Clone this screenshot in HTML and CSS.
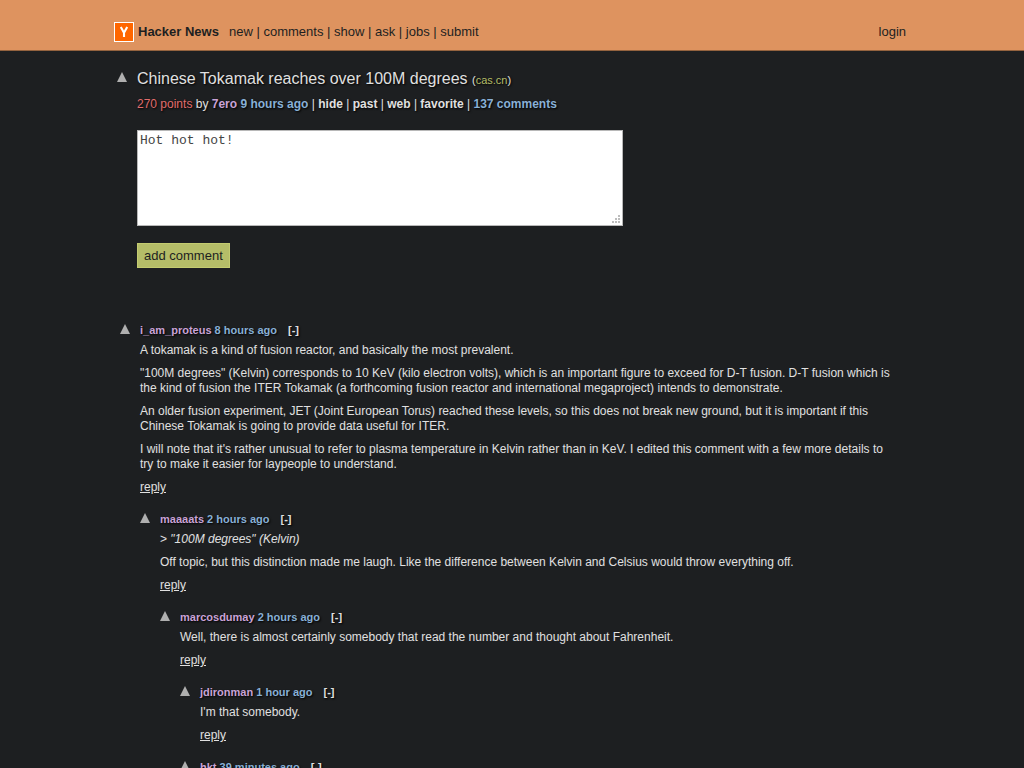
FILE: index.html
```html
<!DOCTYPE html>
<html lang="en">
<head>
<meta charset="utf-8">
<meta name="viewport" content="width=device-width, initial-scale=1">
<title>Chinese Tokamak reaches over 100M degrees | Hacker News</title>
<link rel="stylesheet" href="styles.css">
</head>
<body>
<header class="topbar">
  <div class="wrap topbar-inner">
    <a class="logo" href="#" aria-label="Home"><svg width="20" height="20" viewBox="0 0 20 20" aria-hidden="true"><rect x="0.5" y="0.5" width="19" height="19" fill="#ff6600" stroke="#fff"/><path d="M6.8 5L10 10.8V15M13.2 5L10 10.8" fill="none" stroke="#fff" stroke-width="2.1"/></svg></a>
    <a class="brand" href="#">Hacker News</a>
    <nav class="nav"><a href="#">new</a> | <a href="#">comments</a> | <a href="#">show</a> | <a href="#">ask</a> | <a href="#">jobs</a> | <a href="#">submit</a></nav>
    <a class="login" href="#">login</a>
  </div>
</header>
<main class="wrap">
  <article class="story">
    <a class="vote" href="#" aria-label="Upvote"><svg width="10" height="10" viewBox="0 0 10 10"><path d="M5 0L10 10H0Z"/></svg></a>
    <div class="story-body">
      <h1 class="title"><a href="#">Chinese Tokamak reaches over 100M degrees</a> <span class="site">(<a href="#">cas.cn</a>)</span></h1>
      <p class="subtext"><span class="points">270 points</span> by <a class="user" href="#">7ero</a> <a class="age" href="#">9 hours ago</a> | <a href="#">hide</a> | <a href="#">past</a> | <a href="#">web</a> | <a href="#">favorite</a> | <a class="age" href="#">137 comments</a></p>
      <form class="reply-form">
        <div class="field">
          <textarea class="text" aria-label="Comment">Hot hot hot!</textarea>
          <svg class="grip" width="8" height="8" viewBox="0 0 8 8" aria-hidden="true"><path d="M6 0h2v2H6zM3 3h2v2H3zM6 3h2v2H6zM0 6h2v2H0zM3 6h2v2H3zM6 6h2v2H6z"/></svg>
        </div>
        <button class="submit" type="button">add comment</button>
      </form>
    </div>
  </article>
  <section class="comments">
    <article class="comment">
      <a class="vote" href="#" aria-label="Upvote"><svg width="10" height="10" viewBox="0 0 10 10"><path d="M5 0L10 10H0Z"/></svg></a>
      <div class="comment-body">
        <div class="head"><a class="user" href="#">i_am_proteus</a> <a class="age" href="#">8 hours ago</a> <a class="toggle" href="#">[-]</a></div>
        <p>A tokamak is a kind of fusion reactor, and basically the most prevalent.</p>
        <p>"100M degrees" (Kelvin) corresponds to 10 KeV (kilo electron volts), which is an important figure to exceed for D-T fusion. D-T fusion which is the kind of fusion the ITER Tokamak (a forthcoming fusion reactor and international megaproject) intends to demonstrate.</p>
        <p>An older fusion experiment, JET (Joint European Torus) reached these levels, so this does not break new ground, but it is important if this Chinese Tokamak is going to provide data useful for ITER.</p>
        <p>I will note that it's rather unusual to refer to plasma temperature in Kelvin rather than in KeV. I edited this comment with a few more details to try to make it easier for laypeople to understand.</p>
        <p><a class="reply" href="#">reply</a></p>
      </div>
    </article>
    <article class="comment level-1">
      <a class="vote" href="#" aria-label="Upvote"><svg width="10" height="10" viewBox="0 0 10 10"><path d="M5 0L10 10H0Z"/></svg></a>
      <div class="comment-body">
        <div class="head"><a class="user" href="#">maaaats</a> <a class="age" href="#">2 hours ago</a> <a class="toggle" href="#">[-]</a></div>
        <p>&gt; <i>"100M degrees" (Kelvin)</i></p>
        <p>Off topic, but this distinction made me laugh. Like the difference between Kelvin and Celsius would throw everything off.</p>
        <p><a class="reply" href="#">reply</a></p>
      </div>
    </article>
    <article class="comment level-2">
      <a class="vote" href="#" aria-label="Upvote"><svg width="10" height="10" viewBox="0 0 10 10"><path d="M5 0L10 10H0Z"/></svg></a>
      <div class="comment-body">
        <div class="head"><a class="user" href="#">marcosdumay</a> <a class="age" href="#">2 hours ago</a> <a class="toggle" href="#">[-]</a></div>
        <p>Well, there is almost certainly somebody that read the number and thought about Fahrenheit.</p>
        <p><a class="reply" href="#">reply</a></p>
      </div>
    </article>
    <article class="comment level-3">
      <a class="vote" href="#" aria-label="Upvote"><svg width="10" height="10" viewBox="0 0 10 10"><path d="M5 0L10 10H0Z"/></svg></a>
      <div class="comment-body">
        <div class="head"><a class="user" href="#">jdironman</a> <a class="age" href="#">1 hour ago</a> <a class="toggle" href="#">[-]</a></div>
        <p>I'm that somebody.</p>
        <p><a class="reply" href="#">reply</a></p>
      </div>
    </article>
    <article class="comment level-3">
      <a class="vote" href="#" aria-label="Upvote"><svg width="10" height="10" viewBox="0 0 10 10"><path d="M5 0L10 10H0Z"/></svg></a>
      <div class="comment-body">
        <div class="head"><a class="user" href="#">hkt</a> <a class="age" href="#">39 minutes ago</a> <a class="toggle" href="#">[-]</a></div>
      </div>
    </article>
  </section>
</main>
</body>
</html>
```
FILE: styles.css
```css
* { box-sizing: border-box; }
html { height: 100%; overflow: hidden; }
body {
  margin: 0;
  height: 100%;
  overflow: hidden;
  background: #1d1f21;
  color: #e0e0e0;
  font: 12px/15px "Liberation Sans", Arial, sans-serif;
}
a { color: inherit; text-decoration: none; }
p, h1 { margin: 0; }

.wrap { max-width: 800px; margin: 0 auto; padding: 0 2px; }

.topbar {
  background: #de935f;
  border-bottom: 1px solid #94633f;
  color: #1d1f21;
  font-size: 13px;
  line-height: 20px;
}
.topbar-inner { display: flex; align-items: center; padding-top: 22px; padding-bottom: 8px; }
.logo { display: flex; margin-right: 4px; }
.brand { font-weight: bold; margin-right: 10px; }
.login { margin-left: auto; margin-right: 4px; }

.vote { flex: none; fill: #afafaf; }
.vote svg { display: block; }

.story { display: flex; gap: 10px; padding: 18px 3px 0; }
.story .vote { padding-top: 3px; }
.story-body { flex: 1; min-width: 0; }
.title { font-size: 16px; font-weight: normal; line-height: 20px; text-shadow: 1px 1px 2px #000; }
.site { font-size: 11px; }
.site a { color: #b5bd68; }
.subtext { margin-top: 7px; line-height: 15px; text-shadow: 1px 1px 2px #000; }
.subtext a { font-weight: bold; }
.points { color: #e06c6c; }
.user { color: #c9a3d6; }
.age { color: #88b0d6; }

.reply-form { margin-top: 18px; }
.field { position: relative; max-width: 486px; }
.text {
  display: block;
  width: 100%;
  height: 96px;
  padding: 2px;
  border: 1px solid #b8b8b8;
  border-radius: 0;
  background: #fff;
  color: #444;
  font: 13px/16px "Liberation Mono", "Courier New", monospace;
  resize: none;
  outline: 0;
}
.grip { position: absolute; right: 3px; bottom: 3px; fill: #bdbdbd; }
.submit {
  display: block;
  margin-top: 17px;
  height: 25px;
  padding: 0 6px;
  border: 1px solid #c3cb70;
  background: #b5bd68;
  color: #1d1f21;
  font: 13px/20px "Liberation Sans", Arial, sans-serif;
}

.comments { padding: 56px 16px 0 6px; }
.comment { display: flex; gap: 10px; margin-bottom: 10px; }
.comment-body { flex: 1; min-width: 0; }
.comment p { margin-bottom: 8px; }
.head { font-size: 11px; font-weight: bold; line-height: 13px; margin-bottom: 6px; text-shadow: 1px 1px 2px #000; }
.toggle { margin-left: 8px; }
.reply { text-decoration: underline; }
.level-1 { padding-left: 20px; }
.level-2 { padding-left: 40px; }
.level-3 { padding-left: 60px; }
```
